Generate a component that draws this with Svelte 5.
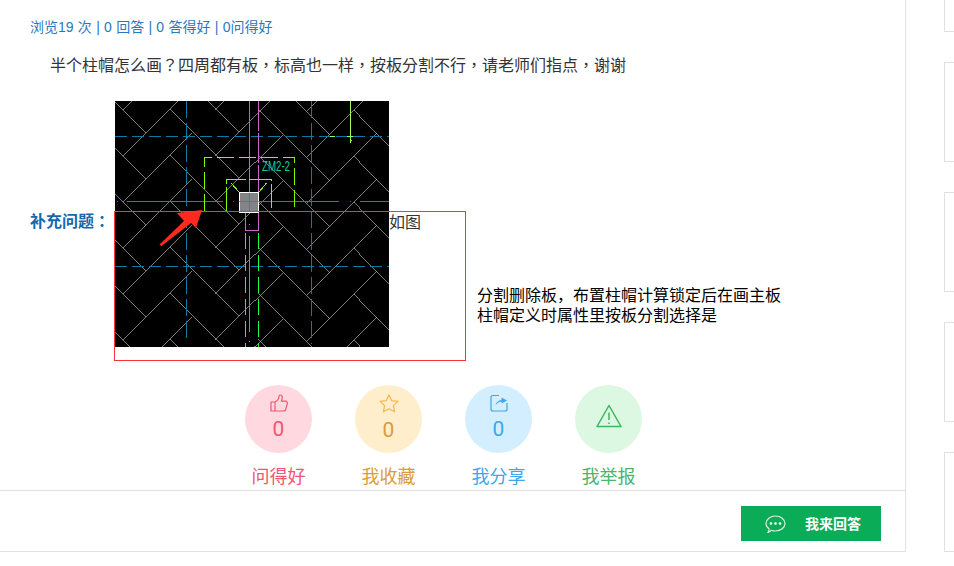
<script>
    // plank edges of the slab hatch, traced from the drawing, repeated every 46px down
    const families = [
        [8.3, 55, 77.3, -14.3],
        [-12.7, 34, 30.7, 77.7],
        [55, 8.3, 123.3, 76.7],
        [100.5, 54.5, 167.5, -12.5],
        [143.7, 8.3, 215.3, 80],
        [192.3, 55.3, 262, -14.3],
        [238.7, 9, 283.3, 55]
    ];
    const hatch = families
        .flatMap(([x1, y1, x2, y2]) =>
            [-1, 0, 1, 2, 3, 4, 5, 6].map((k) => `M${x1} ${y1 + k * 46}L${x2} ${y2 + k * 46}`)
        )
        .join('');

    const actions = [
        { label: '问得好', count: 0, kind: 'like' },
        { label: '我收藏', count: 0, kind: 'star' },
        { label: '我分享', count: 0, kind: 'share' },
        { label: '我举报', kind: 'report' }
    ];
</script>

<div class="page">
    <main class="card">
        <div class="stats">浏览19 次 | 0 回答 | 0 答得好 | 0问得好</div>
        <p class="question">半个柱帽怎么画&#xFF1F;四周都有板&#xFF0C;标高也一样&#xFF0C;按板分割不行&#xFF0C;请老师们指点&#xFF0C;谢谢</p>

        <div class="supplement">
            <span class="label">补充问题&#xFF1A;</span>
            <svg class="drawing" width="274" height="246" viewBox="0 0 274 246">
                <rect width="274" height="246" fill="#000" />
                <path class="hatch" d={hatch} />

                <g class="axis">
                    <path d="M0 35.5H274M0 165.5H274" stroke-dasharray="12 5" />
                    <path d="M71.5 0V242M196.5 0V243" stroke-dasharray="17 5" />
                </g>

                <g fill="none" stroke="#f0f" shape-rendering="crispEdges">
                    <path d="M2 100.5h1M12 100.5H108M118 100.5h1M124 100.5H224M235 100.5h1M245 100.5H274" />
                    <path d="M134.5 0V109M134.5 135V231M134.5 123v1M134.5 240v1" stroke="#e44be4" />
                    <path d="M143.5 0V100" stroke="#cc66cc" stroke-dasharray="30 2" />
                    <path d="M130.5 110V129.5H143.5V110" stroke="#cc66cc" />
                </g>

                <g fill="none" stroke="#80ff00" shape-rendering="crispEdges">
                    <path d="M89.5 110V56.5H179.5V110" stroke-dasharray="17 5" />
                    <path d="M111.5 110V78.5H156.5V110" stroke-dasharray="24 3" />
                    <path d="M116 82L124 91M151.5 82L144 91" />
                    <path d="M235.5 0V42M215 35.5h5M232 35.5h6M235 38l2 2" stroke="#a0ff50" />
                    <path d="M130.5 132V246M143.5 132V246" stroke="#20ff40" stroke-dasharray="16 6" />
                </g>

                <rect x="124.5" y="91.5" width="19" height="20" fill="#848484" stroke="#fff" shape-rendering="crispEdges" />
                <path d="M124 100.5H144M134.5 92V111" stroke="#f0f" opacity="0.7" shape-rendering="crispEdges" />
                <text x="147" y="70" class="tag" textLength="28" lengthAdjust="spacingAndGlyphs">ZM2-2</text>

                <polygon points="44.500,143.500 69,120 62,112 87,109 81,127 76,122 46.500,145" fill="#ff2a1f" />
            </svg>
            <span class="aside">如图</span>

            <div class="note">
                <div class="note-text">分割删除板&#xFF0C;布置柱帽计算锁定后在画主板<br />柱帽定义时属性里按板分割选择是</div>
            </div>
        </div>

        <ul class="actions">
            {#each actions as action}
                <li class="action {action.kind}">
                    <div class="bubble">
                        {#if action.kind === 'like'}
                            <svg width="18" height="18" viewBox="0 0 18 18">
                                <path d="M1 8h4v9H1zM5 8C7 7 9 5 9 2.3 9 .6 11.6 .6 12.1 2.2 12.6 4 11.6 6 11.5 7.2H15.5C17 7.2 17.6 8.6 17.2 10L15.7 15.5C15.4 16.5 14.6 17 13.6 17H5" />
                            </svg>
                        {:else if action.kind === 'star'}
                            <svg width="20" height="19" viewBox="0 0 20 19">
                                <path d="M10 1L12.7 6.6 19 7.4 14.4 11.6 15.6 17.8 10 14.8 4.4 17.8 5.6 11.6 1 7.4 7.3 6.6Z" />
                            </svg>
                        {:else if action.kind === 'share'}
                            <svg width="18" height="18" viewBox="0 0 18 18">
                                <path d="M9 1.5H3Q1 1.5 1 3.5V15Q1 17 3 17H15Q17 17 17 15V9" />
                                <path class="solid" d="M5.500 11.500Q6.500 6.500 11.500 6V3.500L17 6.500 11.500 9.500V7.500Q8 7.500 5.500 11.500Z" />
                            </svg>
                        {:else}
                            <svg width="26" height="24" viewBox="0 0 26 24">
                                <path d="M13 1.500L25 22.500H1ZM13 8.500V16M13 18.500V20" />
                            </svg>
                        {/if}
                        {#if action.count !== undefined}
                            <span class="count">{action.count}</span>
                        {/if}
                    </div>
                    <span class="name">{action.label}</span>
                </li>
            {/each}
        </ul>

        <footer class="footer">
            <button class="answer">
                <svg width="21" height="18" viewBox="0 0 21 18">
                    <path d="M3 17.500C4 16 4.200 15.200 4 13.800 2.200 12.500 1 10.600 1 8.500 1 4.400 5.300 1 10.500 1S20 4.400 20 8.500 15.700 16 10.500 16C9 16 7.500 15.700 6.200 15.200 5.500 16.300 4.500 17.200 3 17.500Z" />
                    <circle cx="6" cy="8.500" r="1.300" />
                    <circle cx="10.500" cy="8.500" r="1.300" />
                    <circle cx="15" cy="8.500" r="1.300" />
                </svg>
                <span>我来回答</span>
            </button>
        </footer>
    </main>

    <aside class="side">
        <div class="box"></div>
        <div class="box"></div>
        <div class="box"></div>
        <div class="box"></div>
        <div class="box"></div>
    </aside>
</div>

<style>
    :global(body) {
        background: #fff;
        overflow: hidden;
    }
    .page {
        display: flex;
        height: 566px;
        overflow: hidden;
        font-family: "Liberation Sans", "Noto Sans CJK SC", sans-serif;
    }
    .card {
        width: 906px;
        height: 552px;
        flex: none;
        box-sizing: border-box;
        display: flex;
        flex-direction: column;
        border-right: 1px solid #e2e2e2;
        border-bottom: 1px solid #e2e2e2;
    }
    .stats {
        margin-top: 17px;
        padding-left: 30px;
        font-size: 14px;
        line-height: 20px;
        word-spacing: 0.4px;
        color: #2a78be;
    }
    .question {
        margin: 19px 0 0;
        padding-left: 50px;
        font-family: "Liberation Sans", "Noto Sans CJK TC", sans-serif;
        font-size: 16px;
        line-height: 20px;
        color: #333;
    }
    .supplement {
        position: relative;
        display: flex;
        align-items: center;
        margin-top: 25px;
        padding-left: 30px;
    }
    .label {
        width: 85px;
        flex: none;
        margin-bottom: 4px;
        font-family: "Liberation Sans", "Noto Sans CJK TC", sans-serif;
        font-size: 16px;
        font-weight: 700;
        line-height: 20px;
        white-space: nowrap;
        color: #1767ab;
    }
    .drawing {
        display: block;
        flex: none;
    }
    .hatch {
        fill: none;
        stroke: #b0b0b0;
        stroke-width: 0.7;
        shape-rendering: crispEdges;
    }
    .axis path {
        fill: none;
        stroke: #0b7ba6;
        stroke-width: 1;
        shape-rendering: crispEdges;
    }
    .tag {
        font-family: "Liberation Sans", sans-serif;
        font-size: 15.5px;
        fill: #00cf9c;
    }
    .aside {
        margin-bottom: 2px;
        font-size: 16px;
        line-height: 20px;
        color: #333;
    }
    /* floating text box dropped on top of the picture */
    .note {
        position: absolute;
        left: 114px;
        top: 110px;
        box-sizing: border-box;
        width: 352px;
        height: 150px;
        padding-top: 64px;
        border: 1px solid #f33;
        font-size: 16px;
        line-height: 20px;
        color: #000;
        white-space: nowrap;
    }
    .note-text {
        margin-left: 362px;
        margin-top: 10px;
    }
    .actions {
        display: flex;
        gap: 43px;
        margin: 38px 0 0;
        padding: 0 0 0 245px;
        list-style: none;
    }
    .action {
        width: 67px;
        display: flex;
        flex-direction: column;
        align-items: center;
    }
    .bubble {
        width: 67px;
        height: 68px;
        border-radius: 50%;
        box-sizing: border-box;
        padding-top: 9px;
        display: flex;
        flex-direction: column;
        align-items: center;
    }
    .bubble svg {
        display: block;
        fill: none;
        stroke: currentColor;
        stroke-width: 1.2;
        stroke-linejoin: round;
    }
    .bubble .solid {
        fill: currentColor;
        stroke: none;
    }
    .count {
        margin-top: 5px;
        font-family: "Roboto", sans-serif;
        font-weight: 400;
        font-size: 21px;
        line-height: 24px;
    }
    .name {
        margin-top: 12px;
        font-size: 18px;
        line-height: 24px;
        white-space: nowrap;
    }
    .like { color: #f0566e; }
    .like .bubble { background: #ffd9df; }
    .star { color: #dc9c36; }
    .star .bubble { background: #ffeecb; }
    .star svg { color: #f6b650; }
    .share { color: #3ea6ea; }
    .share .bubble { background: #d3efff; }
    .report { color: #4cb36a; }
    .report .bubble { background: #dcf8e2; padding-top: 19px; }
    .report .bubble svg { stroke-width: 1.5; color: #3db55d; }
    .footer {
        margin-top: auto;
        height: 61px;
        box-sizing: border-box;
        padding: 15px 24px 0 0;
        border-top: 1px solid #e2e2e2;
        display: flex;
        justify-content: flex-end;
    }
    .answer {
        width: 140px;
        height: 35px;
        padding: 0 0 0 24px;
        border: 0;
        display: flex;
        align-items: center;
        gap: 19px;
        background: #0aac58;
        color: #fff;
        font: 700 14px/20px "Liberation Sans", "Noto Sans CJK SC", sans-serif;
    }
    .answer svg {
        fill: none;
        stroke: #d6f0df;
        stroke-width: 1.2;
    }
    .answer circle {
        fill: #fff;
        stroke: none;
    }
    .side {
        flex: 1;
        margin: -68px 0 0 38px;
        display: flex;
        flex-direction: column;
        gap: 30px;
    }
    .box {
        flex: none;
        height: 100px;
        box-sizing: border-box;
        border: 1px solid #e0e0e0;
        border-right: 0;
    }
</style>
